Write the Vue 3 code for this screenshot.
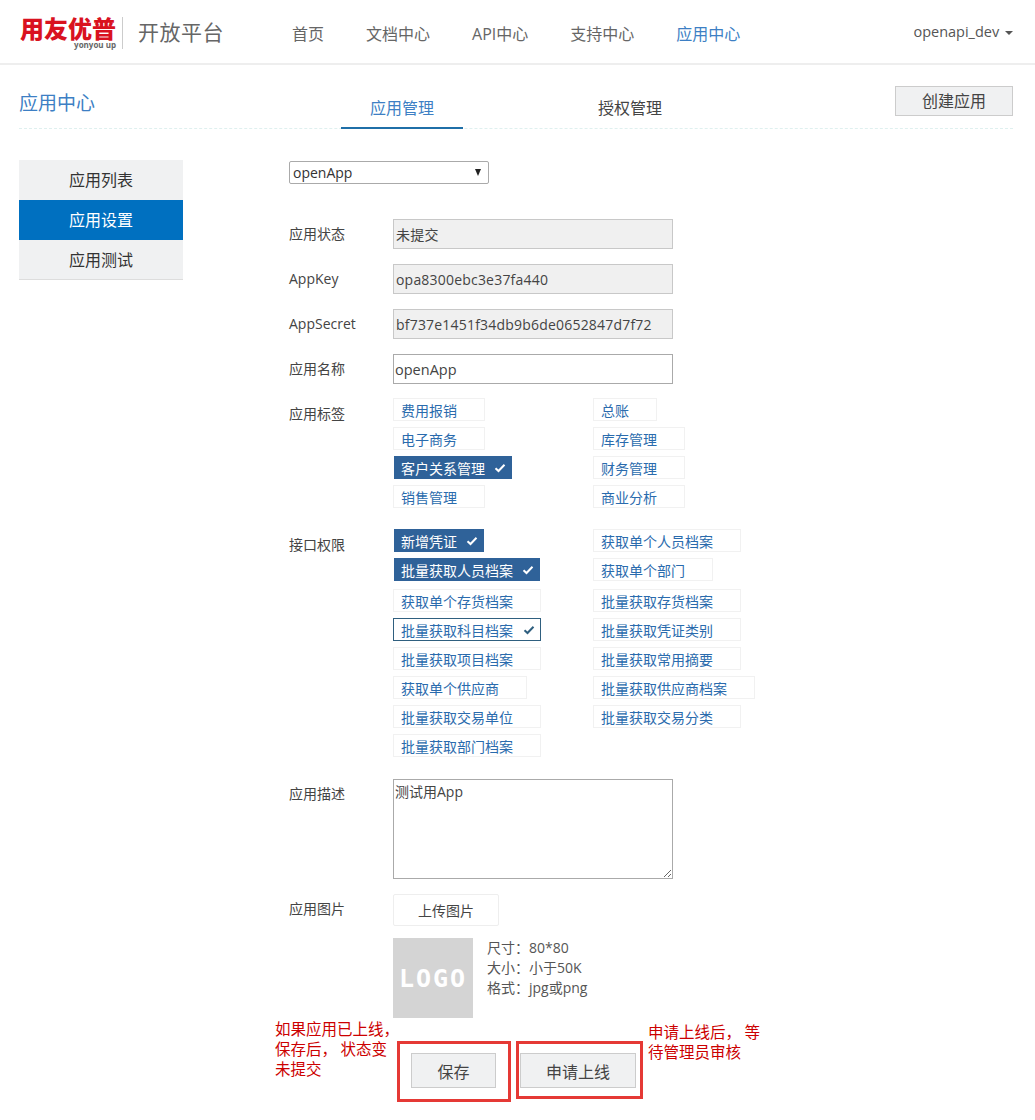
<template>
  <div class="page">
    <header class="topbar">
      <div class="brand">
        <div class="logo">
          <b>用友优普</b>
          <small>yonyou up</small>
        </div>
        <span class="brand-name">开放平台</span>
      </div>
      <nav class="nav">
        <a v-for="item in navItems" :key="item" :class="{ active: item === '应用中心' }">{{ item }}</a>
      </nav>
      <div class="user">openapi_dev <i class="caret"></i></div>
    </header>

    <section class="subhead">
      <h2>应用中心</h2>
      <div class="tabs">
        <a class="tab active">应用管理</a>
        <a class="tab">授权管理</a>
      </div>
      <button class="btn create">创建应用</button>
    </section>

    <div class="body">
      <aside class="side">
        <a v-for="item in sideItems" :key="item" :class="{ active: item === '应用设置' }">{{ item }}</a>
      </aside>

      <main class="form">
        <div class="select-wrap">
          <select class="app-select">
            <option>openApp</option>
          </select>
        </div>

        <div class="fields">
          <div v-for="f in fields" :key="f.label" class="row">
            <label>{{ f.label }}</label>
            <input :class="{ plain: !f.readonly }" :value="f.value" :readonly="f.readonly" />
          </div>
        </div>

        <div class="row row-tags">
          <label>应用标签</label>
          <div class="tags">
            <span v-for="t in labelTags" :key="t.name" :class="['tag', t.state]">
              {{ t.name }}
              <svg v-if="t.state" viewBox="0 0 12 10" width="12" height="10"><path d="M1.5 5.2 4.5 8 10.5 1.8" /></svg>
            </span>
          </div>
        </div>

        <div class="row row-apis">
          <label>接口权限</label>
          <div class="tags">
            <span v-for="t in apiTags" :key="t.name" :class="['tag', t.state]">
              {{ t.name }}
              <svg v-if="t.state" viewBox="0 0 12 10" width="12" height="10"><path d="M1.5 5.2 4.5 8 10.5 1.8" /></svg>
            </span>
          </div>
        </div>

        <div class="row row-desc">
          <label>应用描述</label>
          <textarea>测试用App</textarea>
        </div>

        <div class="row row-upload">
          <label>应用图片</label>
          <div>
            <button class="upload">上传图片</button>
            <div class="logo-info">
              <div class="logo-box">LOGO</div>
              <ul>
                <li>尺寸：80*80</li>
                <li>大小：小于50K</li>
                <li>格式：jpg或png</li>
              </ul>
            </div>
          </div>
        </div>

        <div class="actions">
          <button class="btn save">保存</button>
          <button class="btn apply">申请上线</button>
        </div>
      </main>
    </div>

    <!-- 截图上的红色批注 -->
    <p class="note note-left">如果应用已上线，<br />保存后， 状态变<br />未提交</p>
    <p class="note note-right">申请上线后， 等<br />待管理员审核</p>
    <div class="mark mark-save"></div>
    <div class="mark mark-apply"></div>
  </div>
</template>

<script setup>
const navItems = ['首页', '文档中心', 'API中心', '支持中心', '应用中心']
const sideItems = ['应用列表', '应用设置', '应用测试']

const fields = [
  { label: '应用状态', value: '未提交', readonly: true },
  { label: 'AppKey', value: 'opa8300ebc3e37fa440', readonly: true },
  { label: 'AppSecret', value: 'bf737e1451f34db9b6de0652847d7f72', readonly: true },
  { label: '应用名称', value: 'openApp', readonly: false },
]

const labelTags = [
  { name: '费用报销' },
  { name: '总账' },
  { name: '电子商务' },
  { name: '库存管理' },
  { name: '客户关系管理', state: 'on' },
  { name: '财务管理' },
  { name: '销售管理' },
  { name: '商业分析' },
]

const apiTags = [
  { name: '新增凭证', state: 'on' },
  { name: '获取单个人员档案' },
  { name: '批量获取人员档案', state: 'on' },
  { name: '获取单个部门' },
  { name: '获取单个存货档案' },
  { name: '批量获取存货档案' },
  { name: '批量获取科目档案', state: 'hover' },
  { name: '批量获取凭证类别' },
  { name: '批量获取项目档案' },
  { name: '批量获取常用摘要' },
  { name: '获取单个供应商' },
  { name: '批量获取供应商档案' },
  { name: '批量获取交易单位' },
  { name: '批量获取交易分类' },
  { name: '批量获取部门档案' },
]
</script>

<style>
body {
  background: #fff;
}
</style>

<style scoped>
.page {
  position: relative;
  width: 1035px;
  height: 1120px;
  overflow: hidden;
  background: #fff;
  color: #444;
  font-family: "Open Sans", "Noto Sans CJK SC", sans-serif;
  font-size: 14px;
}

.topbar {
  display: flex;
  align-items: center;
  height: 63px;
  padding: 0 22px 0 21px;
  border-bottom: 2px solid #eee;
}

.brand {
  display: flex;
  align-items: center;
  width: 271px;
}

.logo {
  box-sizing: border-box;
  display: flex;
  flex-direction: column;
  align-items: flex-end;
  width: 102px;
  height: 32px;
  margin-top: 3px;
  padding-right: 6px;
  border-right: 1px solid #ccc;
}

.logo b {
  color: #d9121f;
  font-size: 24px;
  font-weight: 900;
  line-height: 24px;
  white-space: nowrap;
}

.logo small {
  color: #666;
  font-size: 8px;
  font-weight: 700;
  line-height: 8px;
}

.brand-name {
  margin-left: 15px;
  margin-bottom: 2px;
  color: #666;
  font-size: 21px;
  letter-spacing: 0.5px;
}

.nav {
  display: flex;
  gap: 42px;
  flex: 1;
  padding-top: 3px;
}

.nav a {
  color: #666;
  font-size: 16px;
}

.nav a.active {
  color: #3d7fc4;
}

.user {
  color: #555;
  font-size: 14.5px;
}

.caret {
  display: inline-block;
  margin-left: 2px;
  vertical-align: middle;
  border-top: 4px solid #555;
  border-left: 4px solid transparent;
  border-right: 4px solid transparent;
}

.subhead {
  position: relative;
  display: flex;
  justify-content: space-between;
  height: 63px;
  margin: 0 22px 0 19px;
  border-bottom: 1px dashed #dff0ef;
}

.subhead h2 {
  margin: 24px 0 0;
  color: #3d7fc4;
  font-size: 19px;
  font-weight: 400;
  line-height: 28px;
}

.tabs {
  display: flex;
  gap: 135px;
  position: absolute;
  left: 322px;
  top: 28px;
}

.tab {
  width: 122px;
  height: 35px;
  color: #444;
  font-size: 16px;
  line-height: 30px;
  text-align: center;
}

.tab + .tab {
  width: 64px;
}

.tab.active {
  height: 34px;
  color: #3d7fc4;
  border-bottom: 2px solid #1f6fa8;
}

.btn {
  border: 1px solid #ccc;
  background: #f0f1f2;
  color: #444;
  font: inherit;
  padding: 0;
}

.create {
  width: 118px;
  height: 30px;
  margin-top: 21px;
  padding-bottom: 2px;
  font-size: 16px;
}

.body {
  display: flex;
  padding: 31px 0 0 19px;
}

.side {
  display: flex;
  flex-direction: column;
  width: 164px;
  height: 119px;
  border-bottom: 1px solid #ddd;
}

.side a {
  height: 40px;
  background: #f0f1f2;
  color: #333;
  font-size: 16px;
  line-height: 40px;
  text-align: center;
}

.side a:last-child {
  height: 39px;
}

.side a.active {
  background: #0070c0;
  color: #fff;
}

.form {
  margin-left: 106px;
  width: 480px;
}

.select-wrap {
  position: relative;
  width: 200px;
  height: 23px;
  margin-top: 1px;
}

.select-wrap::after {
  content: "";
  position: absolute;
  right: 8px;
  top: 8px;
  border-top: 7px solid #222;
  border-left: 3px solid transparent;
  border-right: 3px solid transparent;
}

.app-select {
  display: block;
  width: 200px;
  height: 23px;
  padding: 0 3px;
  appearance: none;
  background: #fff;
  border: 1px solid #aaa;
  border-radius: 2px;
  color: #333;
  font: inherit;
  font-size: 14px;
}

.fields {
  display: grid;
  gap: 15px;
  margin-top: 35px;
}

.row {
  display: flex;
}

.row label {
  width: 104px;
  flex: none;
  color: #444;
  font-size: 14px;
  line-height: 30px;
}

.row input {
  box-sizing: border-box;
  width: 280px;
  height: 30px;
  padding: 0 2px;
  background: #f0f0f0;
  border: 1px solid #c8c8c8;
  color: #444;
  font: inherit;
  font-size: 14px;
  letter-spacing: 0.2px;
  outline: none;
}

.row input.plain {
  padding: 0 1px;
  background: #fff;
  border-color: #aaa;
  font-size: 14.5px;
  letter-spacing: 0;
}

.row-tags {
  margin-top: 14px;
}

.row-apis {
  margin-top: 21px;
}

.row-tags label,
.row-apis label {
  line-height: 32px;
}

.tags {
  display: grid;
  grid-template-columns: 200px 200px;
  justify-items: start;
  row-gap: 6px;
}

.tag {
  box-sizing: border-box;
  display: inline-flex;
  align-items: center;
  height: 23px;
  padding: 0 27px 0 7px;
  border: 1px solid #f1f1f1;
  color: #2a6bad;
  font-size: 14px;
  white-space: nowrap;
  position: relative;
}

.row-apis .tag:nth-child(3),
.row-apis .tag:nth-child(4) {
  margin-bottom: 2px;
}

.tag svg {
  position: absolute;
  right: 5px;
  top: 6px;
}

.tag path {
  fill: none;
  stroke: currentColor;
  stroke-width: 2;
}

.tag.on {
  margin-left: 1px;
  padding: 0 26px 0 6px;
  background: #2f6299;
  border-color: #2f6299;
  color: #fff;
}

.tag.hover {
  border-color: #2f5f7f;
  color: #2a6bad;
}

.tag.hover svg {
  color: #2f5f7f;
}

.row-desc {
  margin-top: 22px;
}

.row-desc label,
.row-upload label {
  line-height: 30px;
}

.row-desc textarea {
  box-sizing: border-box;
  display: block;
  width: 280px;
  height: 100px;
  padding: 1px;
  border: 1px solid #aaa;
  color: #444;
  font: inherit;
  font-size: 14px;
  outline: none;
}

.row-upload {
  margin-top: 15px;
}

.upload {
  display: block;
  width: 106px;
  height: 32px;
  padding: 0;
  background: #fff;
  border: 1px solid #eee;
  border-radius: 2px;
  color: #444;
  font: inherit;
  font-size: 14px;
}

.logo-info {
  display: flex;
  gap: 14px;
  margin-top: 12px;
}

.logo-box {
  width: 80px;
  height: 80px;
  background: #d4d4d4;
  color: #fff;
  font-family: "DejaVu Sans Mono", monospace;
  font-size: 25px;
  font-weight: 700;
  letter-spacing: 2px;
  line-height: 82px;
  text-align: center;
}

.logo-info ul {
  margin: 0;
  padding: 0;
  list-style: none;
  color: #555;
  font-size: 14px;
  line-height: 20px;
}

.actions {
  display: flex;
  gap: 24px;
  margin: 35px 0 0 122px;
}

.save {
  width: 85px;
  height: 35px;
  font-size: 16px;
}

.apply {
  width: 116px;
  height: 35px;
  font-size: 16px;
}

.note {
  position: absolute;
  margin: 0;
  color: #c00;
  font-family: "Noto Sans CJK SC", sans-serif;
  font-size: 15.5px;
  line-height: 20px;
  white-space: nowrap;
}

.note-left {
  left: 275px;
  top: 1018px;
}

.note-right {
  left: 648px;
  top: 1021px;
}

.mark {
  position: absolute;
  box-sizing: border-box;
  border: 3px solid #e53935;
}

.mark-save {
  left: 397px;
  top: 1041px;
  width: 114px;
  height: 61px;
}

.mark-apply {
  left: 516px;
  top: 1041px;
  width: 127px;
  height: 58px;
}
</style>
